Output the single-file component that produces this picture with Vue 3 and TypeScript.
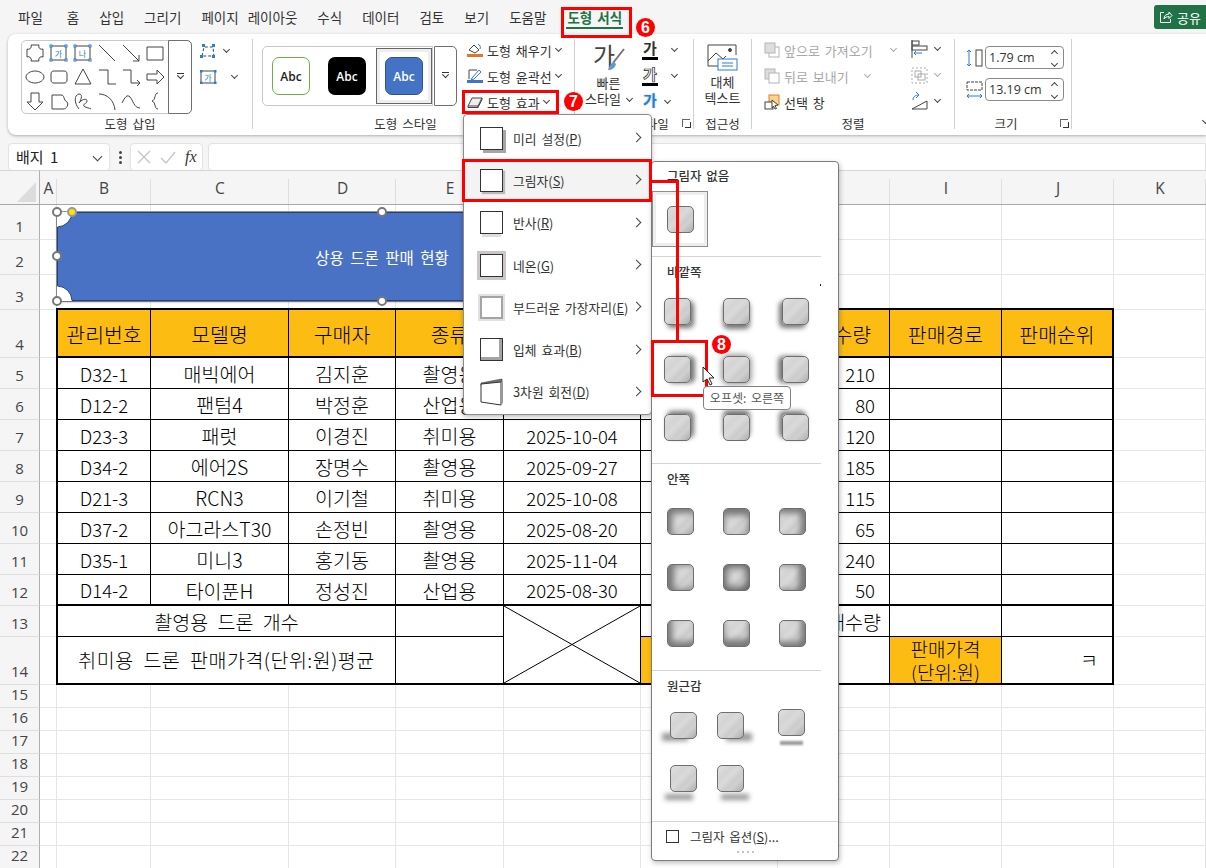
<script setup lang="ts">
/**
 * Excel: shape format ribbon with the shadow gallery opened
 */
const tabs = ['파일', '홈', '삽입', '그리기', '페이지 레이아웃', '수식', '데이터', '검토', '보기', '도움말']

const shapes: string[] = [
  'M8 4h8a3 3 0 0 0 4 4v8a3 3 0 0 0-4 4H8a3 3 0 0 0-4-4V8a3 3 0 0 0 4-4z',
  '', '',
  'M4 4l16 16',
  'M4 4l16 16M20 14v6h-6',
  'M4 6h16v13H4z',
  'M12 6c5 0 9 3 9 6s-4 6-9 6-9-3-9-6 4-6 9-6z',
  'M7 6h10c2 0 3 1 3 3v6c0 2-1 3-3 3H7c-2 0-3-1-3-3V9c0-2 1-3 3-3z',
  'M12 4l8 15H4z',
  'M4 5h9v14h8',
  'M4 5h8v13h9M18 15l3 3-3 3',
  'M4 9h10V5l7 7-7 7v-4H4z',
  'M8 4h8v9h4l-8 8-8-8h4z',
  'M5 6h9c4 0 2 5 6 7 2 2 0 7-4 7H5z',
  'M8 20C3 14 3 6 8 5c5 0 1 8 0 9 3-4 8-5 8-2s-5 3-3 5 6 2 7 3',
  'M4 5c8 0 15 6 16 16',
  'M3 14c3-6 5-9 8-6s4 11 10 11',
  'M15 4c-4 0-2 7-6 8 4 1 2 8 6 8',
]

const rows = [
  ['D32-1', '매빅에어', '김지훈', '촬영용', '', '210'],
  ['D12-2', '팬텀4', '박정훈', '산업용', '', '80'],
  ['D23-3', '패럿', '이경진', '취미용', '2025-10-04', '120'],
  ['D34-2', '에어2S', '장명수', '촬영용', '2025-09-27', '185'],
  ['D21-3', 'RCN3', '이기철', '취미용', '2025-10-08', '115'],
  ['D37-2', '아그라스T30', '손정빈', '촬영용', '2025-08-20', '65'],
  ['D35-1', '미니3', '홍기동', '촬영용', '2025-11-04', '240'],
  ['D14-2', '타이푼H', '정성진', '산업용', '2025-08-30', '50'],
]

const colLetters = ['A', 'B', 'C', 'D', 'E', 'F', 'G', 'H', 'I', 'J', 'K']
const rowHeights = [35, 35, 35, 48, 31, 31, 31, 31, 31, 31, 31, 31, 31, 48, 23, 23, 23, 23, 23, 23, 23, 23]

const menuItems = [
  { label: '미리 설정', key: 'P', icon: 'preset' },
  { label: '그림자', key: 'S', icon: 'shadow' },
  { label: '반사', key: 'R', icon: 'reflect' },
  { label: '네온', key: 'G', icon: 'glow' },
  { label: '부드러운 가장자리', key: 'E', icon: 'soft' },
  { label: '입체 효과', key: 'B', icon: 'bevel' },
  { label: '3차원 회전', key: 'D', icon: 'rotate' },
]

const outerShadows = [
  '3px 3px 5px #777', '0 4px 5px #777', '-3px 3px 5px #777',
  '4px 0 5px #777', '0 0 6px 1px #888', '-4px 0 5px #777',
  '3px -3px 5px #777', '0 -4px 5px #777', '-3px -3px 5px #777',
]
const innerShadows = [
  'inset 4px 4px 6px #777', 'inset 0 6px 6px #777', 'inset -4px 4px 6px #777',
  'inset 6px 0 6px #777', 'inset 0 0 9px 2px #555', 'inset -6px 0 6px #777',
  'inset 4px -4px 6px #777', 'inset 0 -6px 6px #777', 'inset -4px -4px 6px #777',
]
const perspective = ['p-left', 'p-right', 'p-under', 'p-low-left', 'p-low-right']
</script>

<template>
  <div class="app">
    <header class="menubar">
      <span v-for="t in tabs" :key="t" class="tab">{{ t }}</span>
      <span class="tab tab-active">도형 서식</span>
      <button class="share">
        <svg width="14" height="14" viewBox="0 0 14 14" fill="none" stroke="#fff"><path d="M5 2.5H1.5v10h10V9M5 9c0-3 2-5 5-5V2l3 3.500-3 3V6.500C8 6.500 6 7.500 5 9z"/></svg>
        공유
      </button>
    </header>

    <section class="ribbon">
      <div class="group g1">
        <div class="g-body">
          <div class="shape-gallery">
            <div class="shape-grid">
              <svg v-for="(d, i) in shapes" :key="i" width="24" height="24" viewBox="0 0 24 24" fill="none" stroke="#444">
                <template v-if="i === 1 || i === 2">
                  <rect x="4" y="5" width="15" height="14" />
                  <text x="11.500" y="15.500" font-size="8" text-anchor="middle" fill="#2f86d0" stroke="none">{{ i === 1 ? '가' : '나' }}</text>
                  <g fill="#fff" stroke="#2b7cd3"><rect x="3" y="4" width="2" height="2"/><rect x="18" y="4" width="2" height="2"/><rect x="3" y="18" width="2" height="2"/><rect x="18" y="18" width="2" height="2"/></g>
                </template>
                <path v-else :d="d" />
              </svg>
            </div>
            <div class="spin tall"><i class="spin-mark"></i></div>
          </div>
          <div class="side-tools">
            <div class="tool-row">
              <svg width="18" height="16" viewBox="0 0 18 16" fill="none" stroke="#444"><path d="M3 13L5 4h9l1 9z" stroke-dasharray="3 2"/><g fill="#2b7cd3" stroke="none"><rect x="3" y="1" width="3" height="3"/><rect x="13" y="1" width="3" height="3"/><rect x="1" y="12" width="3" height="3"/><rect x="13" y="12" width="3" height="3"/></g></svg>
              <i class="chev"></i>
            </div>
            <div class="tool-row wide">
              <svg width="18" height="16" viewBox="0 0 18 16" fill="none" stroke="#444"><rect x="2" y="2" width="14" height="12"/><text x="9" y="12" font-size="8" text-anchor="middle" fill="#2f86d0" stroke="none">가</text><g fill="#2b7cd3" stroke="none"><rect x="1" y="1" width="2.500" height="2.500"/><rect x="15" y="1" width="2.500" height="2.500"/><rect x="1" y="12.500" width="2.500" height="2.500"/><rect x="15" y="12.500" width="2.500" height="2.500"/></g></svg>
              <i class="chev"></i>
            </div>
          </div>
        </div>
        <div class="g-label">도형 삽입</div>
      </div>

      <div class="group g2">
        <div class="g-body">
          <div class="style-gallery">
            <div class="abc-cell"><span class="abc abc-green">Abc</span></div>
            <div class="abc-cell"><span class="abc abc-black">Abc</span></div>
            <div class="abc-cell abc-selected"><span class="abc abc-blue">Abc</span></div>
          </div>
          <div class="spin style-spin"><i class="spin-mark"></i></div>
          <div class="fmt-col">
            <div class="fmt-row">
              <svg width="16" height="16" viewBox="0 0 16 16" fill="none" stroke="#444"><path d="M2 8l5-5 5 5-4 3z"/><path d="M11 2c2 1 3 3 2 5" stroke="#2b7cd3"/><path d="M0 13.500h16" stroke="#e2762c" stroke-width="3"/></svg>
              도형 채우기 <i class="chev"></i>
            </div>
            <div class="fmt-row">
              <svg width="16" height="16" viewBox="0 0 16 16" fill="none" stroke="#444"><path d="M2 2h8M2 2v9"/><path d="M5 10l7-8 2 2-7 7-3 1z" stroke="#2b7cd3"/><path d="M0 13.500h16" stroke="#4472c4" stroke-width="3"/></svg>
              도형 윤곽선 <i class="chev"></i>
            </div>
            <div class="fmt-row">
              <svg width="16" height="14" viewBox="0 0 16 14" fill="none" stroke="#444"><path d="M5 3h10l-4 8H1z" fill="#eee"/><path d="M1 11v1.500h10L15 4.500V3M11 11v1.500" /></svg>
              도형 효과 <i class="chev"></i>
            </div>
          </div>
        </div>
        <div class="g-label label-g2">도형 스타일</div>
      </div>

      <div class="group g3">
        <div class="g-body">
          <div class="big-btn quick">
            <svg width="34" height="30" viewBox="0 0 34 30" fill="none"><text x="1" y="23" font-size="24" fill="#444" stroke="none">가</text><path d="M32 7L21 21" stroke="#777" stroke-width="2"/><path d="M22 20c-3 1-5 4-6 8 4 0 7-2 8-6z" fill="#5b9bd5"/></svg>
            <span>빠른</span>
            <span class="quick-2">스타일 <i class="chev"></i></span>
          </div>
          <div class="wa-col">
            <div class="wa-row"><span class="wa wa-under">가</span><i class="chev"></i></div>
            <div class="wa-row"><span class="wa wa-under wa-out">가</span><i class="chev"></i></div>
            <div class="wa-row narrow"><span class="wa wa-glow">가</span><i class="chev"></i></div>
          </div>
        </div>
        <div class="g-label label-g3">WordArt 스타일<i class="launcher"></i></div>
      </div>

      <div class="group g4">
        <div class="g-body">
          <div class="big-btn alt">
            <svg width="32" height="28" viewBox="0 0 32 28" fill="none" stroke="#444"><path d="M12 22H1V1h28v10"/><path d="M1 17l8-8 7 6 3-3" /><circle cx="23" cy="6" r="1.500" fill="#444"/><rect x="11" y="15" width="19" height="11" stroke="#2b7cd3" fill="#fff"/><path d="M15 19h11M15 22h11" stroke="#2b7cd3"/></svg>
            <span>대체</span>
            <span>텍스트</span>
          </div>
        </div>
        <div class="g-label">접근성</div>
      </div>

      <div class="group g5">
        <div class="g-body">
          <div class="arr-col">
            <div class="arr-row off">
              <svg width="16" height="16" viewBox="0 0 16 16" fill="#ddd" stroke="#b5b5b5"><rect x="5" y="5" width="10" height="10" fill="#fff"/><rect x="1" y="1" width="10" height="10"/></svg>
              앞으로 가져오기 <i class="chev gap-a"></i>
            </div>
            <div class="arr-row off">
              <svg width="16" height="16" viewBox="0 0 16 16" fill="#ddd" stroke="#b5b5b5"><rect x="1" y="1" width="10" height="10"/><rect x="5" y="5" width="10" height="10" fill="#fff"/></svg>
              뒤로 보내기 <i class="chev gap-b"></i>
            </div>
            <div class="arr-row">
              <svg width="16" height="16" viewBox="0 0 16 16" fill="none" stroke="#444"><rect x="5" y="1" width="10" height="10" fill="#fbd38d" stroke="#d9822b"/><rect x="1" y="8" width="8" height="7" fill="#fff"/><path d="M8 6l6 5-3 .5 1.500 3-1.500.5-1.500-3L8 14z" fill="#fff"/></svg>
              선택 창
            </div>
          </div>
          <div class="align-col">
            <div class="tool-row">
              <svg width="17" height="18" viewBox="0 0 17 18" fill="none" stroke="#444"><path d="M1 0v18"/><rect x="1" y="1" width="7" height="4"/><rect x="1" y="6" width="15" height="4"/><path d="M11 13H3M5 11l-2 2 2 2" stroke="#2b7cd3"/></svg>
              <i class="chev"></i>
            </div>
            <div class="tool-row off">
              <svg width="17" height="17" viewBox="0 0 17 17" fill="none" stroke="#aaa"><path d="M1 1h15v15H1z" stroke-dasharray="2 2"/><rect x="4" y="4" width="6" height="6"/><rect x="7" y="7" width="7" height="6"/></svg>
              <i class="chev"></i>
            </div>
            <div class="tool-row">
              <svg width="17" height="18" viewBox="0 0 17 18" fill="none" stroke="#444"><path d="M1 17L16 9v8z"/><path d="M2 8c0-3 2-5 6-5M5 0l3 3-3 3" stroke="#2b7cd3"/></svg>
              <i class="chev"></i>
            </div>
          </div>
        </div>
        <div class="g-label label-g5">정렬</div>
      </div>

      <div class="group g6">
        <div class="g-body">
          <div class="size-col">
            <div class="size-row">
              <svg width="17" height="18" viewBox="0 0 17 18" fill="none"><path d="M3 1v16M1 3l2-2 2 2M1 15l2 2 2-2" stroke="#2b7cd3"/><rect x="10" y="1" width="6" height="16" stroke="#444"/></svg>
              <div class="size-input">1.79 cm<span class="steppers"><i class="up"></i><i class="down"></i></span></div>
            </div>
            <div class="size-row">
              <svg width="17" height="18" viewBox="0 0 17 18" fill="none"><rect x="1" y="1" width="15" height="8" stroke="#444" stroke-dasharray="3 1"/><path d="M1 15h15M3 13l-2 2 2 2M14 13l2 2-2 2" stroke="#2b7cd3"/></svg>
              <div class="size-input">13.19 cm<span class="steppers"><i class="up"></i><i class="down"></i></span></div>
            </div>
          </div>
        </div>
        <div class="g-label label-g6">크기<i class="launcher"></i></div>
      </div>
      <i class="chev collapse"></i>
    </section>

    <div class="formula-bar">
      <div class="name-box">배지 1<i class="chev name-chev"></i></div>
      <div class="dots"><i></i><i></i><i></i></div>
      <div class="fx-box">
        <svg width="16" height="16" viewBox="0 0 16 16" fill="none" stroke="#c4c4c4" stroke-width="1.300"><path d="M2 2l12 12M14 2L2 14"/></svg>
        <svg width="16" height="16" viewBox="0 0 16 16" fill="none" stroke="#c4c4c4" stroke-width="1.300"><path d="M1 9l5 5L15 3"/></svg>
        <span class="fx">fx</span>
      </div>
      <div class="formula-input"></div>
    </div>

    <div class="sheet">
      <div class="corner"><i></i></div>
      <div v-for="c in colLetters" :key="c" class="col-head"><span>{{ c }}</span></div>
      <template v-for="(h, r) in rowHeights" :key="r">
        <div class="row-head" :style="{ gridRow: r + 2, gridColumn: 1 }">{{ r + 1 }}</div>
        <div v-for="(c, ci) in colLetters" :key="c" class="grid-cell" :style="{ gridRow: r + 2, gridColumn: ci + 2 }"></div>
      </template>

      <div class="data-table">
        <div class="c head">관리번호</div>
        <div class="c head">모델명</div>
        <div class="c head">구매자</div>
        <div class="c head">종류</div>
        <div class="c head"></div>
        <div class="c head"></div>
        <div class="c head">판매수량</div>
        <div class="c head">판매경로</div>
        <div class="c head last">판매순위</div>
        <template v-for="(r, i) in rows" :key="i">
          <div class="c num" :class="{ tail: i === 7 }">{{ r[0] }}</div>
          <div class="c" :class="{ tail: i === 7 }">{{ r[1] }}</div>
          <div class="c" :class="{ tail: i === 7 }">{{ r[2] }}</div>
          <div class="c" :class="{ tail: i === 7 }">{{ r[3] }}</div>
          <div class="c num" :class="{ tail: i === 7 }">{{ r[4] }}</div>
          <div class="c" :class="{ tail: i === 7 }"></div>
          <div class="c num qty" :class="{ tail: i === 7 }">{{ r[5] }}</div>
          <div class="c" :class="{ tail: i === 7 }"></div>
          <div class="c last" :class="{ tail: i === 7 }"></div>
        </template>
        <div class="c span3">촬영용 드론 개수</div>
        <div class="c"></div>
        <div class="c cross">
          <svg width="100%" height="100%" viewBox="0 0 100 100" preserveAspectRatio="none"><path d="M0 0L100 100M100 0L0 100" stroke="#000" stroke-width="1" vector-effect="non-scaling-stroke"/></svg>
        </div>
        <div class="c span2 sum-qty">판매수량</div>
        <div class="c"></div>
        <div class="c last"></div>
        <div class="c span3 bottom long">취미용 드론 판매가격(단위:원)평균</div>
        <div class="c bottom"></div>
        <div class="c orange bottom"></div>
        <div class="c bottom"></div>
        <div class="c orange bottom two-line">판매가격<br />(단위:원)</div>
        <div class="c last bottom kieuk">ㅋ</div>
      </div>
    </div>

    <!-- selected shape, floats over the cells -->
    <div class="plaque">
      <svg class="plaque-bg" width="650" height="89" viewBox="0 0 650 89">
        <path d="M15 .5H635A15 15 0 0 0 649.500 15V74A15 15 0 0 0 635 88.500H15A15 15 0 0 0 .5 74V15A15 15 0 0 0 15 .5Z" fill="#4a72c4" stroke="#26417a" />
      </svg>
      <span class="plaque-text">상용 드론 판매 현황</span>
      <i class="handle h-tl"></i>
      <i class="handle h-adj"></i>
      <i class="handle h-tc"></i>
      <i class="handle h-ml"></i>
      <i class="handle h-bl"></i>
      <i class="handle h-bc"></i>
    </div>

    <div class="effect-menu">
      <div v-for="m in menuItems" :key="m.key" class="menu-item" :class="{ hovered: m.key === 'S' }">
        <svg v-if="m.icon === 'rotate'" class="rot-ico" width="24" height="28" viewBox="0 0 24 28"><path d="M1 5l21-4v3L1 8z" fill="#777" stroke="#333" stroke-width=".6"/><path d="M1 6l20-2v23L1 24z" fill="#fff" stroke="#333"/><path d="M21 4h2v21l-2 2z" fill="#999"/></svg>
        <i v-else class="m-ico" :class="m.icon"></i>
        <span class="m-label">{{ m.label }}(<u>{{ m.key }}</u>)</span>
        <i class="m-arrow"></i>
      </div>
    </div>

    <div class="shadow-panel">
      <div class="p-head first">그림자 없음</div>
      <div class="none-tile"><i class="swatch"></i></div>
      <hr class="p-sep sep-a" />
      <div class="p-head">바깥쪽</div>
      <div class="tile-grid outer">
        <div v-for="s in outerShadows" :key="s" class="tile"><i class="swatch" :style="{ boxShadow: s }"></i></div>
      </div>
      <hr class="p-sep sep-b" />
      <div class="p-head">안쪽</div>
      <div class="tile-grid inner">
        <div v-for="s in innerShadows" :key="s" class="tile"><i class="swatch" :style="{ boxShadow: s }"></i></div>
      </div>
      <hr class="p-sep sep-c" />
      <div class="p-head">원근감</div>
      <div class="tile-grid persp">
        <div v-for="p in perspective" :key="p" class="tile"><i class="swatch" :class="p"></i></div>
      </div>
      <hr class="p-sep sep-d" />
      <div class="options"><i class="check"></i>그림자 옵션(<u>S</u>)...</div>
      <div class="grip"><i></i><i></i><i></i><i></i></div>
      <i class="stray"></i>
    </div>

    <!-- callouts drawn over the screenshot -->
    <i class="red-box rb-tab"></i>
    <i class="red-box rb-effect"></i>
    <i class="red-box rb-shadow"></i>
    <i class="red-box rb-offset"></i>
    <i class="red-line line-h"></i>
    <i class="red-line line-v"></i>
    <span class="badge b6">6</span>
    <span class="badge b7">7</span>
    <span class="badge b8">8</span>

    <svg class="cursor" width="14" height="20" viewBox="0 0 14 20"><path d="M1 1v15l4-3 3 6 2-1-3-6h5z" fill="#fff" stroke="#222"/></svg>
    <div class="tooltip">오프셋: 오른쪽</div>
  </div>
</template>

<style scoped>
.app { position: relative; width: 1206px; height: 868px; overflow: hidden; background: #f5f5f5; font-family: "Noto Sans CJK KR", "Liberation Sans", sans-serif; font-size: 13px; color: #333; }

.menubar { display: flex; align-items: center; height: 34px; padding-left: 8px; }
.tab { padding: 0 10px; font-size: 13.5px; line-height: 20px; color: #333; white-space: nowrap; word-spacing: 6px; }
.tab:first-child { margin-right: 4px; }
.tab-active { margin-left: 1px; color: #217346; font-weight: 700; position: relative; word-spacing: 2px; }
.tab-active::after { content: ''; position: absolute; left: 9px; right: 9px; bottom: -2px; height: 2px; background: #217346; }
.share { display: flex; align-items: center; gap: 4px; margin-left: auto; width: 52px; height: 24px; padding: 0 0 0 5px; border: none; border-radius: 3px 0 0 3px; background: #217346; color: #fff; font: 13px "Noto Sans CJK KR", sans-serif; }

.ribbon { position: relative; display: flex; height: 101px; margin-left: 8px; padding: 5px 0 0; box-sizing: border-box; background: #fff; border-radius: 8px 0 0 8px; box-shadow: 0 1px 3px rgba(0,0,0,.3); }
.group { position: relative; display: flex; flex-direction: column; flex: none; height: 90px; box-sizing: border-box; border-right: 1px solid #d0d0d0; }
.g1 { width: 245px; }
.g2 { width: 322px; }
.g3 { width: 119px; }
.g4 { width: 58px; }
.g5 { width: 203px; }
.g6 { width: 117px; }
.g-body { display: flex; flex: 1; min-height: 0; }
.g-label { position: relative; flex: none; height: 20px; margin-bottom: -5px; line-height: 20px; text-align: center; font-size: 12.5px; color: #333; word-spacing: 2px; white-space: nowrap; }
.label-g2 { padding-right: 16px; }
.label-g3 { padding-right: 18px; }
.label-g6 { padding-right: 14px; }

.chev { display: inline-block; flex: none; width: 4px; height: 4px; margin: 0 0 3px 3px; border-right: 1.2px solid #444; border-bottom: 1.2px solid #444; transform: rotate(45deg); }
.launcher { position: absolute; right: 3px; top: 5px; width: 7px; height: 7px; border: 1px solid #666; border-right-color: #333; }
.label-g6 .launcher, .label-g3 .launcher { border-width: 1px 0 0 1px; }
.label-g3 .launcher::after, .label-g6 .launcher::after { content: ''; position: absolute; right: -1px; bottom: -1px; width: 5px; height: 5px; border-right: 1px solid #333; border-bottom: 1px solid #333; }

.shape-gallery { display: flex; margin: 1px 0 0 13px; width: 171px; height: 74px; box-sizing: border-box; border: 1px solid #c8c8c8; border-radius: 5px; }
.shape-grid { display: grid; grid-template-columns: repeat(6, 24px); grid-auto-rows: 24px; width: 147px; padding-left: 1px; box-sizing: border-box; }
.spin { display: flex; align-items: center; justify-content: center; box-sizing: border-box; border: 1px solid #6f6f6f; border-radius: 0 5px 5px 0; background: #fff; }
.tall { width: 24px; margin: -1px -1px -1px 0; }
.spin-mark { width: 7px; height: 7px; border-top: 1px solid #333; position: relative; }
.spin-mark::after { content: ''; position: absolute; left: 1px; top: 0; width: 4px; height: 4px; border-right: 1px solid #333; border-bottom: 1px solid #333; transform: rotate(45deg) translate(-.5px, -.5px); }
.side-tools { display: flex; flex-direction: column; gap: 8px; margin: 3px 0 0 7px; }
.tool-row { display: flex; flex: none; align-items: center; height: 18px; gap: 4px; }
.tool-row.wide { gap: 12px; }
.tool-row.off .chev { border-color: #aaa; }

.style-gallery { display: flex; align-items: center; width: 171px; height: 60px; margin: 7px 0 0 9px; box-sizing: border-box; border: 1px solid #c8c8c8; border-radius: 5px 0 0 5px; }
.abc-cell { display: flex; align-items: center; justify-content: center; width: 56px; height: 56px; box-sizing: border-box; }
.abc-selected { width: 56px; border: 1px solid #666; background: #fff; box-shadow: inset 0 0 0 3px #eee; margin-left: auto; }
.abc { display: flex; align-items: center; justify-content: center; width: 38px; height: 38px; box-sizing: border-box; border-radius: 7px; font: 600 12px "Open Sans", sans-serif; }
.abc-green { border: 1px solid #70ad47; color: #222; }
.abc-black { background: #000; color: #fff; }
.abc-blue { background: #4472c4; border: 1px solid #2f528f; color: #fff; }
.style-spin { width: 23px; height: 60px; margin: 7px 0 0 1px; }
.fmt-col { display: flex; flex-direction: column; gap: 2px; margin: -1px 0 0 10px; }
.fmt-row { display: flex; flex: none; align-items: center; gap: 4px; height: 24px; font-size: 13px; white-space: nowrap; word-spacing: 2px; }
.fmt-row .chev { margin-left: 0; }

.big-btn { display: flex; flex-direction: column; align-items: center; line-height: 16px; font-size: 13px; white-space: nowrap; }
.quick { flex: none; width: 67px; padding-top: 3px; }
.quick svg { margin-bottom: 3px; }
.quick-2 { margin-top: 0; }
.wa-col { display: flex; flex-direction: column; gap: 2px; margin-top: -1px; }
.wa-row { display: flex; flex: none; align-items: center; gap: 11px; height: 24px; }
.wa-row.narrow { gap: 4px; }
.wa { width: 16px; height: 20px; line-height: 16px; text-align: center; font-size: 15px; font-weight: 700; color: #333; }
.wa-under { border-bottom: 3px solid #000; box-sizing: border-box; }
.wa-out { color: #fff; -webkit-text-stroke: .7px #222; }
.wa-glow { color: #2b7cd3; text-shadow: 0 0 2px #9cc3e6; }
.alt { width: 100%; padding-top: 5px; }
.alt svg { margin-bottom: 2px; }

.arr-col { display: flex; flex: none; flex-direction: column; gap: 2px; margin: -1px 0 0 12px; width: 147px; }
.arr-row { display: flex; flex: none; align-items: center; gap: 4px; height: 24px; white-space: nowrap; word-spacing: 2px; }
.arr-row.off { color: #a8a8a8; }
.arr-row.off .chev { border-color: #aaa; }
.gap-a { margin-left: 14px; }
.gap-b { margin-left: 12px; }
.align-col { display: flex; flex-direction: column; gap: 8px; margin-top: 1px; }

.size-col { display: flex; flex-direction: column; gap: 9px; margin: 7px 0 0 11px; }
.size-row { display: flex; align-items: center; gap: 2px; }
.size-input { position: relative; width: 79px; height: 23px; line-height: 21px; box-sizing: border-box; padding-left: 3px; border: 1px solid #8a8a8a; border-radius: 4px; font: 12.5px/21px "Open Sans", sans-serif; color: #333; }
.steppers { position: absolute; right: 6px; top: 4px; display: flex; flex-direction: column; gap: 5px; }
.steppers i { width: 4px; height: 4px; border-left: 1px solid #444; border-top: 1px solid #444; transform: rotate(45deg); }
.steppers .down { transform: rotate(225deg); }
.collapse { position: absolute; right: -2px; bottom: 9px; }

.formula-bar { display: flex; align-items: center; height: 28px; margin-top: 8px; padding-left: 8px; }
.name-box { position: relative; width: 102px; height: 28px; box-sizing: border-box; padding-left: 7px; background: #fff; border: 1px solid #e2e2e2; border-radius: 4px; font-size: 15px; line-height: 25px; color: #222; word-spacing: 3px; }
.name-chev { position: absolute; right: 8px; top: 9px; width: 6px; height: 6px; }
.dots { display: flex; flex-direction: column; gap: 2px; width: 20px; align-items: center; }
.dots i { width: 3px; height: 3px; background: #444; border-radius: 50%; }
.fx-box { display: flex; align-items: center; gap: 8px; width: 73px; height: 28px; box-sizing: border-box; padding-left: 5px; background: #fff; border: 1px solid #e2e2e2; border-radius: 4px; }
.fx { font: italic 16px "Liberation Serif", serif; color: #333; margin-left: 1px; }
.formula-input { flex: 1; height: 28px; margin-left: 5px; box-sizing: border-box; background: #fff; border: 1px solid #e2e2e2; border-radius: 4px 0 0 4px; }

.sheet { position: relative; display: grid; grid-template-columns: 40px 17px 94px 138px 107px 108px 137px 137px 112px 112px 112px 92px; grid-template-rows: 35px 35px 35px 35px 48px repeat(9, 31px) 48px repeat(8, 23px); margin-top: -1px; height: 699px; overflow: hidden; background: #fff; }
.corner { position: relative; background: #f5f5f5; border-top: 1px solid #d6d6d6; border-right: 1px solid #b0b0b0; border-bottom: 1px solid #a8a8a8; box-sizing: border-box; }
.corner i { position: absolute; right: 3px; bottom: 2px; width: 19px; height: 20px; background: #dcdcdc; clip-path: polygon(100% 0, 100% 100%, 0 100%); }
.col-head { display: flex; align-items: center; justify-content: center; box-sizing: border-box; background: #f5f5f5; border-top: 1px solid #d6d6d6; border-bottom: 1px solid #a8a8a8; font: 15.5px "Open Sans", sans-serif; color: #444; position: relative; }
.col-head::after { content: ''; position: absolute; right: 0; top: 8px; bottom: 0; width: 1px; background: #dedede; }
.row-head { display: flex; align-items: flex-end; justify-content: center; box-sizing: border-box; padding-bottom: 3px; background: #f5f5f5; border-right: 1px solid #b0b0b0; border-bottom: 1px solid #dedede; font: 15px/20px "Open Sans", sans-serif; color: #444; }
.grid-cell { box-sizing: border-box; border-right: 1px solid #e6e6e6; border-bottom: 1px solid #e6e6e6; }

.data-table { grid-column: 3 / 12; grid-row: 5 / 16; display: grid; grid-template-columns: 93px 138px 107px 108px 137px 137px 112px 112px 110px; grid-template-rows: 48px repeat(8, 31px) 31px 46px; align-self: start; margin: -2px 0 0 -1px; width: 1058px; height: 377px; box-sizing: border-box; border: 2px solid #000; background: #fff; font-size: 19.5px; font-weight: 300; color: #000; z-index: 1; }
.c { display: flex; align-items: center; justify-content: center; box-sizing: border-box; padding-top: 2px; border-right: 1px solid #000; border-bottom: 1px solid #000; white-space: nowrap; line-height: 1.1; }
.head { background: #fdbc11; border-bottom-width: 2px; font-size: 20.5px; }
.last { border-right: none; }
.tail { border-bottom-width: 2px; }
.bottom { border-bottom: none; }
.num { font-size: 18.5px; }
.qty { justify-content: flex-end; padding-right: 14px; }
.span3 { grid-column: span 3; word-spacing: 5px; }
.long { letter-spacing: .5px; padding-top: 0; }
.span2 { grid-column: span 2; }
.cross { grid-row: span 2; border-bottom: none; padding: 0; }
.cross svg { display: block; }
.sum-qty { justify-content: flex-end; padding-right: 8px; }
.orange { background: #fdbc11; }
.two-line { text-align: center; font-size: 19px; line-height: 23px; padding-top: 0; }
.kieuk { justify-content: flex-end; padding-right: 14px; padding-top: 0; }

.plaque { position: absolute; left: 57px; top: 212px; width: 650px; height: 89px; display: flex; align-items: center; justify-content: center; box-sizing: border-box; outline: 1px solid #999; z-index: 2; }
.plaque-bg { position: absolute; inset: 0; background: #fff; filter: drop-shadow(0 1px 1px rgba(0,0,0,.35)); }
.plaque-text { position: relative; color: #fff; font-size: 15.5px; word-spacing: 3px; }
.handle { position: absolute; width: 10px; height: 10px; box-sizing: border-box; margin: -5px 0 0 -5px; border: 2px solid #777; border-radius: 50%; background: #fff; }
.h-tl { left: 0; top: 0; }
.h-adj { left: 15px; top: 0; background: #ffe000; border-color: #999; }
.h-tc { left: 325px; top: 0; }
.h-ml { left: 0; top: 44px; }
.h-bl { left: 0; top: 89px; }
.h-bc { left: 325px; top: 89px; }

.effect-menu { position: absolute; left: 463px; top: 114px; width: 189px; height: 301px; box-sizing: border-box; padding: 2px 0; background: #fff; border: 1px solid #8c8c8c; border-radius: 4px; box-shadow: 0 2px 5px rgba(0,0,0,.25); z-index: 3; }
.menu-item { position: relative; display: flex; align-items: center; height: 42.300px; padding-left: 16px; white-space: nowrap; }
.menu-item.hovered { background: #f3f3f3; }
.m-ico { flex: none; width: 23px; height: 23px; box-sizing: border-box; border: 1.500px solid #333; background: #fff; }
.m-ico.preset { box-shadow: 3px 3px 0 #a9a5a5; }
.m-ico.shadow { box-shadow: 2px 2px 1px #bdb9b9; }
.m-ico.reflect { border-width: 1px; box-shadow: 0 5px 0 -2px #ddd; }
.m-ico.glow { box-shadow: 0 0 0 3px #cbc7c7; }
.m-ico.soft { border: 2px solid #a4a4a4; box-shadow: 0 0 0 2px #e2e2e2; }
.m-ico.bevel { box-shadow: inset -3px -3px 0 #a4a4a4; }
.rot-ico { flex: none; }
.m-label { margin-left: 10px; font-size: 12.8px; color: #333; word-spacing: 2px; }
.rot-ico + .m-label { margin-left: 9px; }
.m-arrow { position: absolute; right: 11px; top: 50%; width: 6px; height: 6px; margin-top: -4px; border-right: 1.200px solid #444; border-top: 1.200px solid #444; transform: rotate(45deg); }

.shadow-panel { position: absolute; left: 651px; top: 161px; width: 188px; height: 700px; box-sizing: border-box; background: #fff; border: 1px solid #7c7c7c; border-radius: 4px; box-shadow: 1px 2px 5px rgba(0,0,0,.25); z-index: 3; }
.p-head { height: 25px; padding: 5px 0 0 15px; box-sizing: border-box; font-size: 12.500px; line-height: 20px; font-weight: 500; color: #333; word-spacing: 2px; }
.p-head.first { height: 29px; padding-top: 4px; }
.none-tile { display: flex; align-items: center; justify-content: center; width: 56px; height: 56px; box-sizing: border-box; border: 1px solid #8c8c8c; box-shadow: inset 0 0 0 3px #eee; }
.p-sep { height: 1px; margin: 0 17px 0 0; border: none; background: #d4d4d4; }
.sep-a { margin-top: 9px; }
.sep-b { margin-top: 7px; }
.sep-c { margin-top: 9px; }
.sep-d { margin: 16px 0 0; }
.tile-grid { display: grid; }
.tile { display: flex; align-items: center; justify-content: center; }
.outer { grid-template-columns: repeat(3, 59px); grid-auto-rows: 58px; margin-left: -4px; }
.inner { grid-template-columns: repeat(3, 56px); grid-auto-rows: 56px; margin-top: 4px; }
.persp { grid-template-columns: 47px 47px 75px; grid-auto-rows: 53px; margin: 3px 0 0 8px; position: relative; z-index: 0; }
.swatch { position: relative; display: block; width: 27px; height: 27px; box-sizing: border-box; border: 1px solid #6e6e6e; border-radius: 5px; background: linear-gradient(135deg, #e0e0e0 0%, #d4d4d4 30%, #dadada 45%, #cccccc 62%, #d0d0d0 72%, #adadad 100%); }
.p-left::before, .p-right::before, .p-under::before, .p-low-left::before, .p-low-right::before { content: ''; position: absolute; z-index: -1; background: #999; filter: blur(2.5px); }
.p-left::before { left: -9px; bottom: -3px; width: 26px; height: 8px; }
.p-right::before { right: -9px; bottom: -3px; width: 26px; height: 8px; }
.p-under { margin-bottom: 6px; }
.p-under::before { left: 1px; right: 1px; bottom: -10px; height: 4px; filter: blur(1px); }
.p-low-left::before { left: -6px; right: 3px; bottom: -9px; height: 6px; }
.p-low-right::before { left: 3px; right: -6px; bottom: -9px; height: 6px; }
.options { display: flex; align-items: center; height: 28px; padding-left: 14px; font-size: 12.500px; color: #333; word-spacing: 2px; }
.check { width: 13px; height: 13px; box-sizing: border-box; margin-right: 11px; border: 1.300px solid #333; }
.grip { display: flex; justify-content: center; gap: 3px; margin-top: 1px; }
.grip i { width: 2px; height: 2px; background: #c4c4c4; }
.stray { position: absolute; left: 168px; top: 122px; width: 1px; height: 2px; background: #222; }

.red-box { position: absolute; box-sizing: border-box; border: 3px solid #f00; z-index: 4; }
.rb-tab { left: 561px; top: 7px; width: 71px; height: 31px; }
.rb-effect { left: 462px; top: 90px; width: 97px; height: 24px; }
.rb-shadow { left: 462px; top: 159px; width: 190px; height: 43px; }
.rb-offset { left: 651px; top: 340px; width: 57px; height: 57px; }
.red-line { position: absolute; background: #f00; z-index: 4; }
.line-h { left: 651px; top: 180px; width: 28px; height: 3px; }
.line-v { left: 676px; top: 180px; width: 3px; height: 161px; }
.badge { position: absolute; display: flex; align-items: center; justify-content: center; width: 19px; height: 19px; border-radius: 50%; background: #f00; color: #fff; font: 700 16px/19px "Liberation Sans", sans-serif; z-index: 5; }
.b6 { left: 636px; top: 18px; }
.b7 { left: 564px; top: 92px; }
.b8 { left: 712px; top: 335px; }

.cursor { position: absolute; left: 702px; top: 366px; z-index: 5; }
.tooltip { position: absolute; left: 703px; top: 386px; width: 88px; height: 24px; box-sizing: border-box; background: #fff; border: 1px solid #808080; border-radius: 4px; font-size: 12px; line-height: 21px; text-align: center; color: #555; z-index: 5; word-spacing: 2px; }
</style>
